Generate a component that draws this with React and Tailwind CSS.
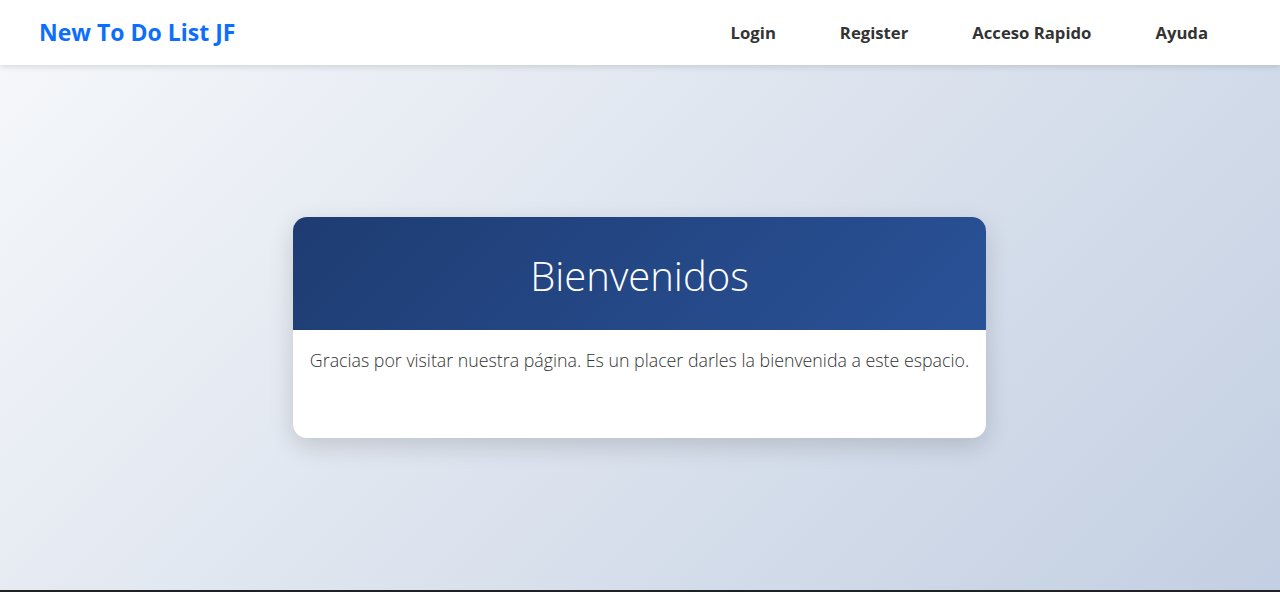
export default function App() {
  const links = ["Login", "Register", "Acceso Rapido", "Ayuda"];

  return (
    <div className="flex h-[592px] flex-col font-['Open_Sans',sans-serif]">
      {/* Navbar */}
      <nav className="relative z-10 flex h-[65px] shrink-0 items-center justify-between bg-white pl-[39px] pr-[72px] shadow-[0_2px_6px_rgba(0,0,0,0.12)]">
        <a href="#" className="text-[23px] font-bold text-[#0d6efd]">
          New To Do List JF
        </a>
        <ul className="flex items-center gap-[64px]">
          {links.map((l) => (
            <li key={l}>
              <a href="#" className="text-[16.7px] font-bold text-[#333]">
                {l}
              </a>
            </li>
          ))}
        </ul>
      </nav>

      {/* Main */}
      <main className="flex flex-1 items-center justify-center bg-[linear-gradient(135deg,#f5f7fa_0%,#c3cfe2_100%)]">
        <div className="-ml-px w-[693px] overflow-hidden rounded-[14px] bg-white shadow-[0_8px_24px_rgba(0,0,0,0.15)]">
          <div className="flex h-[113px] items-center justify-center bg-[linear-gradient(135deg,#1e3c72_0%,#2a5298_100%)] pt-1">
            <h1 className="text-[40px] font-light text-white">Bienvenidos</h1>
          </div>
          <div className="h-[108px] px-3 pt-[17px]">
            <p className="whitespace-nowrap text-center text-[17.8px] font-light text-[#333]">
              Gracias por visitar nuestra página. Es un placer darles la bienvenida a este espacio.
            </p>
          </div>
        </div>
      </main>
      <div className="h-[2px] shrink-0 bg-[#202124]" />
    </div>
  );
}
